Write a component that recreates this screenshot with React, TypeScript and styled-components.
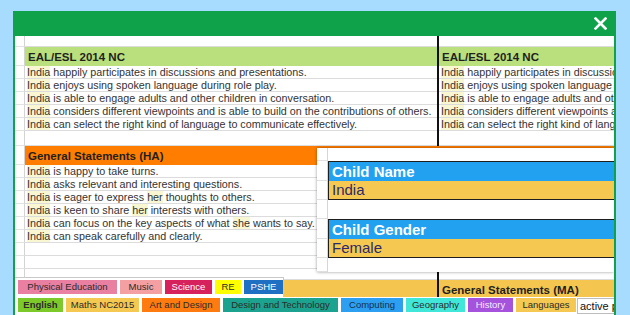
import React from 'react';
import styled, { createGlobalStyle } from 'styled-components';

const GlobalStyle = createGlobalStyle`
  html, body {
    margin: 0;
    padding: 0;
    background: #a8dcfe;
    overflow: hidden;
  }
  body {
    font-family: "Liberation Sans", Arial, sans-serif;
  }
`;

const Page = styled.div`
  width: 630px;
  height: 315px;
  padding: 11px 0 0 13px;
  box-sizing: border-box;
  overflow: hidden;
`;

const Frame = styled.div`
  width: 603px;
  height: 304px;
  background: #0fa24b;
  padding: 0 2px;
  box-sizing: border-box;
  display: flex;
  flex-direction: column;
`;

const TitleBar = styled.div`
  height: 25px;
  flex: none;
  display: flex;
  align-items: center;
  justify-content: flex-end;
  padding-right: 7px;
`;

const Sheet = styled.div`
  flex: 1;
  background: #fff;
  position: relative;
  overflow: hidden;
`;

const Row = styled.div<{ $h: number }>`
  display: grid;
  grid-template-columns: 10px 412px 2px 1fr;
  height: ${p => p.$h}px;
`;

const RowHead = styled.div`
  border-right: 1px solid #d3d3d3;
  border-bottom: 1px solid #e2e2e2;
`;

const Cell = styled.div<{ $bg?: string; $head?: boolean }>`
  background: ${p => p.$bg || '#fff'};
  border-bottom: ${p => (p.$head ? 'none' : '1px solid #dcdcdc')};
  padding-left: ${p => (p.$head ? 3 : 2)}px;
  font-size: ${p => (p.$head ? 11.5 : 10.75)}px;
  font-weight: ${p => (p.$head ? 700 : 400)};
  color: ${p => (p.$head ? '#1f1f1f' : '#333')};
  display: flex;
  align-items: ${p => (p.$head ? 'center' : 'flex-end')};
  white-space: pre;
  overflow: hidden;
  line-height: 12px;
`;

const CellText = styled.span`
  white-space: pre;
`;

const Divider = styled.div<{ $color?: string }>`
  background: ${p => p.$color || '#111'};
`;

const Name = styled.span`
  background: #f8f7d2;
`;

const Popup = styled.div`
  position: absolute;
  left: 302px;
  top: 112px;
  right: 0;
  height: 124px;
  background: #fff;
  box-shadow: 0 0 3px rgba(0, 0, 0, 0.4);
  display: grid;
  grid-template-columns: 11px 1fr;
`;

const Gutter = styled.div`
  display: flex;
  flex-direction: column;
  border-right: 1px solid #d6d6d6;
`;

const GutterCell = styled.div<{ $h: number }>`
  height: ${p => p.$h}px;
  flex: none;
  border-bottom: 1px solid #e0e0e0;
  box-sizing: border-box;
`;

const Fields = styled.div`
  display: flex;
  flex-direction: column;
  gap: 19px;
  padding-top: 13px;
`;

const Field = styled.div`
  border: 1.5px solid #1e1e1e;
  border-right: none;
`;

const FieldLabel = styled.div`
  height: 19px;
  background: #22a1f1;
  color: #fff;
  font-weight: 700;
  font-size: 15px;
  line-height: 19px;
  padding-left: 3px;
`;

const FieldValue = styled.div`
  height: 18px;
  background: #f5c851;
  color: #2c2a6a;
  font-size: 15px;
  line-height: 18px;
  padding-left: 3px;
`;

const TabDock = styled.div`
  position: absolute;
  left: 0;
  right: 0;
  bottom: 0;
  display: flex;
  flex-direction: column;
`;

const TabStrip = styled.div<{ $edge?: boolean }>`
  display: flex;
  align-items: flex-start;
  gap: 3px;
  background: #fff;
  padding-left: 3px;
  box-sizing: border-box;
  ${p =>
    p.$edge
      ? `
    width: 269px;
    height: 20px;
    padding-top: 2px;
    border-top: 1px solid #c9c9c9;
    border-right: 1px solid #c9c9c9;
  `
      : `
    height: 18px;
    padding-top: 1px;
  `}
`;

const Tab = styled.div<{ $bg: string; $fg?: string; $w: number; $bold?: boolean }>`
  width: ${p => p.$w}px;
  height: 14px;
  flex: none;
  background: ${p => p.$bg};
  color: ${p => p.$fg || '#2b2b2b'};
  font-size: 9.5px;
  font-weight: ${p => (p.$bold ? 700 : 400)};
  line-height: 14px;
  text-align: center;
  white-space: nowrap;
  overflow: hidden;
`;

const ActiveBox = styled.div`
  flex: 1;
  height: 14px;
  margin-left: -2px;
  border: 1px solid #bdbdbd;
  border-right: none;
  background: #fff;
  color: #111;
  font-size: 11px;
  line-height: 14px;
  padding-left: 2px;
  white-space: nowrap;
  overflow: hidden;
`;

const CloseIcon = () => (
  <svg width="13" height="13" viewBox="0 0 13 13">
    <path d="M1.5 1.5 L11.5 11.5 M11.5 1.5 L1.5 11.5" stroke="#fff" strokeWidth="2.6" strokeLinecap="square" />
  </svg>
);

const Marked = ({ text }: { text: string }) => (
  <CellText>
    {text.split(/(\{[^}]+\})/).map((part, i) =>
      part.startsWith('{') ? <Name key={i}>{part.slice(1, -1)}</Name> : part
    )}
  </CellText>
);

type Line = { h: number; head?: boolean; bg?: string; rule?: string; left?: string; right?: string };

const eal = [
  '{India} happily participates in discussions and presentations.',
  '{India} enjoys using spoken language during role play.',
  '{India} is able to engage adults and other children in conversation.',
  '{India} considers different viewpoints and is able to build on the contributions of others.',
  '{India} can select the right kind of language to communicate effectively.',
];

const ha = [
  '{India} is happy to take turns.',
  '{India} asks relevant and interesting questions.',
  '{India} is eager to express {her} thoughts to others.',
  '{India} is keen to share {her} interests with others.',
  '{India} can focus on the key aspects of what {she} wants to say.',
  '{India} can speak carefully and clearly.',
];

const lines: Line[] = [
  { h: 11 },
  { h: 19, head: true, bg: '#b9e07d', left: 'EAL/ESL 2014 NC', right: 'EAL/ESL 2014 NC' },
  ...eal.map(t => ({ h: 13, left: t, right: t })),
  { h: 15 },
  { h: 19, head: true, bg: '#ff7d00', rule: '#ff7d00', left: 'General Statements (HA)', right: 'General Statements (HA)' },
  ...ha.map(t => ({ h: 13, left: t, right: t })),
  { h: 13 },
  { h: 13 },
  { h: 11 },
  { h: 19, head: true, bg: '#f4c54f', right: 'General Statements (MA)' },
  { h: 13 },
];

const topTabs = [
  { label: 'Physical Education', bg: '#e97fa1', w: 99 },
  { label: 'Music', bg: '#f4a0a3', w: 42 },
  { label: 'Science', bg: '#d6215d', fg: '#fff', w: 47 },
  { label: 'RE', bg: '#ffff00', w: 26 },
  { label: 'PSHE', bg: '#1f70c2', fg: '#fff', w: 39 },
];

const bottomTabs = [
  { label: 'English', bg: '#7cc92a', w: 45, bold: true },
  { label: 'Maths NC2015', bg: '#f5c851', w: 73 },
  { label: 'Art and Design', bg: '#ff7b10', w: 78 },
  { label: 'Design and Technology', bg: '#1ba38f', w: 115 },
  { label: 'Computing', bg: '#2c9ff0', fg: '#15314f', w: 62 },
  { label: 'Geography', bg: '#40e7d8', w: 59 },
  { label: 'History', bg: '#a553dc', fg: '#f3e9ff', w: 45 },
  { label: 'Languages', bg: '#f5c851', w: 60 },
];

const App: React.FC = () => (
  <Page>
    <GlobalStyle />
    <Frame>
      <TitleBar>
        <CloseIcon />
      </TitleBar>
      <Sheet>
        {lines.map((line, i) => (
          <Row key={i} $h={line.h}>
            <RowHead />
            <Cell $bg={line.bg} $head={line.head}>
              {line.left && <Marked text={line.left} />}
            </Cell>
            <Divider $color={line.rule} />
            <Cell $bg={line.bg} $head={line.head}>
              {line.right && <Marked text={line.right} />}
            </Cell>
          </Row>
        ))}

        <Popup>
          <Gutter>
            {[13, 20, 19, 19, 20, 19, 14].map((h, i) => (
              <GutterCell key={i} $h={h} />
            ))}
          </Gutter>
          <Fields>
            <Field>
              <FieldLabel>Child Name</FieldLabel>
              <FieldValue>India</FieldValue>
            </Field>
            <Field>
              <FieldLabel>Child Gender</FieldLabel>
              <FieldValue>Female</FieldValue>
            </Field>
          </Fields>
        </Popup>

        <TabDock>
          <TabStrip $edge>
            {topTabs.map(t => (
              <Tab key={t.label} $bg={t.bg} $fg={t.fg} $w={t.w}>
                {t.label}
              </Tab>
            ))}
          </TabStrip>
          <TabStrip>
            {bottomTabs.map(t => (
              <Tab key={t.label} $bg={t.bg} $fg={t.fg} $w={t.w} $bold={t.bold}>
                {t.label}
              </Tab>
            ))}
            <ActiveBox>active p</ActiveBox>
          </TabStrip>
        </TabDock>
      </Sheet>
    </Frame>
  </Page>
);

export default App;
